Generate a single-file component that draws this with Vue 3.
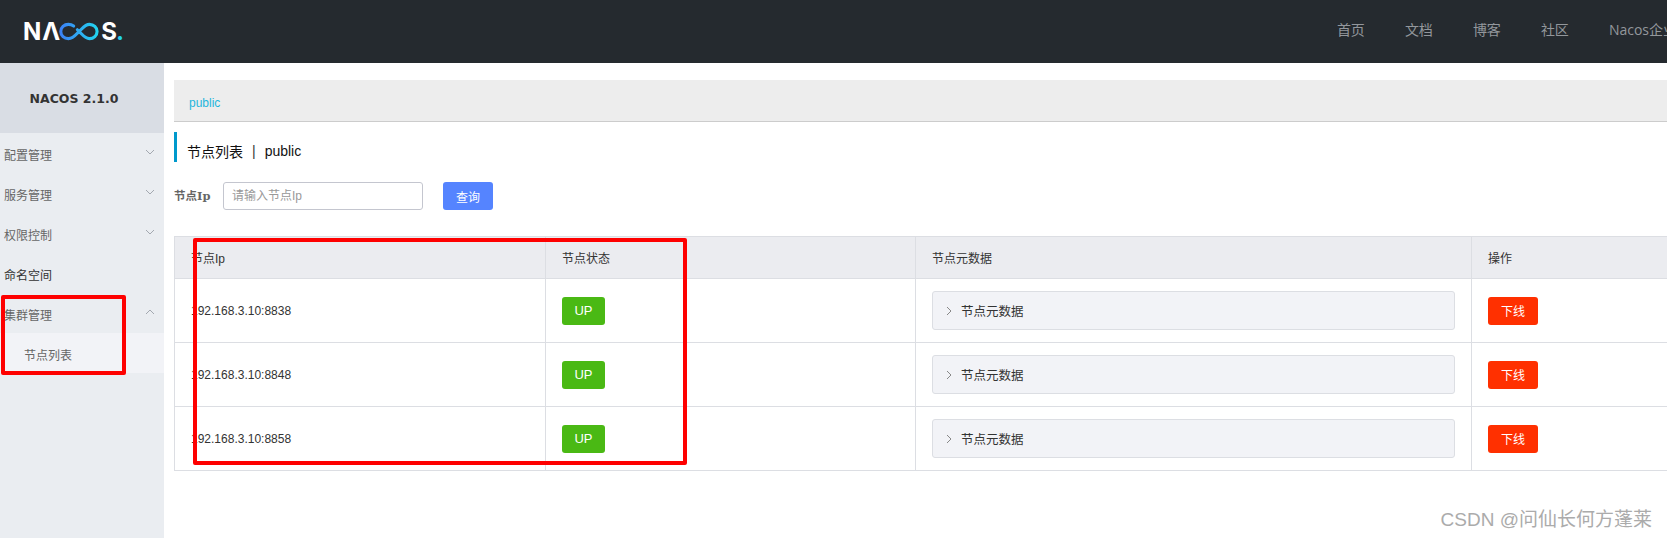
<template>
  <div class="page">
    <header class="topbar">
      <div class="logo">
        <span>N</span><span class="logo-a">Λ</span>
        <svg class="logo-loop" width="41" height="19" viewBox="0 0 42 18" fill="none">
          <defs>
            <linearGradient id="loopGrad" x1="0" y1="0" x2="1" y2="0">
              <stop offset="0" stop-color="#3b82f6" />
              <stop offset="1" stop-color="#22d3ee" />
            </linearGradient>
          </defs>
          <path d="M15 3.4C13.4 2.3 11.6 1.7 9.6 1.7 5.3 1.7 1.8 4.9 1.8 9s3.5 7.3 7.8 7.3c3.7 0 6.4-2.5 9.2-5.5l3.6-3.6c2.6-2.7 5-5.5 8.8-5.5 4.3 0 7.8 3.3 7.8 7.3s-3.5 7.3-7.8 7.3c-3.8 0-6.2-2.8-8.8-5.5L18.8 7.2" stroke="url(#loopGrad)" stroke-width="3.2" stroke-linecap="round" />
        </svg>
        <span>S</span><span class="logo-dot">.</span>
      </div>
      <nav class="topnav">
        <a v-for="item in navItems" :key="item">{{ item }}</a>
      </nav>
    </header>

    <div class="body">
      <aside class="sidebar">
        <div class="version">NACOS 2.1.0</div>
        <div v-for="menu in menus" :key="menu.label">
          <div class="menu-item" :class="{ dark: menu.dark }">
            <span>{{ menu.label }}</span>
            <svg v-if="menu.arrow" class="menu-arrow" :class="{ up: menu.open }" width="10" height="6" viewBox="0 0 10 6" fill="none">
              <path d="M1 1l4 4 4-4" stroke="#a3a8b0" stroke-width="1" />
            </svg>
          </div>
          <div v-if="menu.open" class="submenu">节点列表</div>
        </div>
      </aside>

      <main class="content">
        <div class="crumb">public</div>
        <div class="title"><span>节点列表</span><i>|</i><span>public</span></div>

        <div class="search">
          <label>节点Ip</label>
          <input class="search-input" placeholder="请输入节点Ip" />
          <button class="btn-query">查询</button>
        </div>

        <div class="table">
          <div class="row head">
            <div class="cell">节点Ip</div>
            <div class="cell">节点状态</div>
            <div class="cell">节点元数据</div>
            <div class="cell">操作</div>
          </div>
          <div v-for="ip in nodes" :key="ip" class="row">
            <div class="cell">{{ ip }}</div>
            <div class="cell"><span class="tag-up">UP</span></div>
            <div class="cell">
              <div class="meta">
                <svg width="6" height="10" viewBox="0 0 6 10" fill="none">
                  <path d="M1 1l4 4-4 4" stroke="#888" stroke-width="1" />
                </svg>
                <span>节点元数据</span>
              </div>
            </div>
            <div class="cell"><button class="btn-offline">下线</button></div>
          </div>
        </div>
      </main>
    </div>

    <!-- hand-drawn annotations on top of the screenshot -->
    <div class="mark mark-menu"></div>
    <div class="mark mark-table"></div>
    <div class="watermark">CSDN @问仙长何方蓬莱</div>
  </div>
</template>

<script setup>
const navItems = ['首页', '文档', '博客', '社区', 'Nacos企业版']

const menus = [
  { label: '配置管理', arrow: true },
  { label: '服务管理', arrow: true },
  { label: '权限控制', arrow: true },
  { label: '命名空间', dark: true },
  { label: '集群管理', arrow: true, open: true }
]

const nodes = ['192.168.3.10:8838', '192.168.3.10:8848', '192.168.3.10:8858']
</script>

<style>
html,
body {
  margin: 0;
  background: #fff;
  overflow: hidden;
}
</style>

<style scoped>
.page {
  position: relative;
  width: 1667px;
  height: 538px;
  overflow: hidden;
  font-family: "Liberation Sans", "Noto Sans CJK SC", sans-serif;
  font-size: 12px;
  color: #333;
}

.topbar {
  display: flex;
  align-items: center;
  height: 63px;
  background: #252a2f;
  white-space: nowrap;
}

.logo {
  display: flex;
  align-items: center;
  margin-left: 23px;
  font-family: "Inter", sans-serif;
  font-size: 24px;
  font-weight: 700;
  line-height: 1;
  color: #fff;
}

.logo-a {
  margin-left: 1px;
}

.logo-loop {
  margin: 0 1px 0 -1px;
}

.logo-dot {
  color: #22d3ee;
  margin-left: -1px;
}

.topnav {
  display: flex;
  gap: 40px;
  margin-left: auto;
  margin-right: -24px;
  padding-bottom: 6px;
  font-family: "Open Sans", "Noto Sans CJK SC", sans-serif;
  font-size: 14px;
  color: #93979c;
}

.body {
  display: flex;
}

.sidebar {
  flex: none;
  width: 164px;
  height: 475px;
  background: #eaedf1;
}

.version {
  display: flex;
  align-items: center;
  justify-content: center;
  box-sizing: border-box;
  height: 70px;
  padding-right: 16px;
  background: #d9dde4;
  font-family: "DejaVu Sans", "Noto Sans CJK SC", sans-serif;
  font-size: 12.5px;
  font-weight: 700;
  color: #333;
}

.menu-item {
  display: flex;
  align-items: center;
  justify-content: space-between;
  box-sizing: border-box;
  height: 40px;
  padding: 2px 9px 0 4px;
  color: #666;
}

.menu-item.dark {
  color: #333;
}

.menu-arrow {
  margin-top: -5px;
}

.menu-arrow.up {
  transform: rotate(180deg);
}

.submenu {
  display: flex;
  align-items: center;
  box-sizing: border-box;
  height: 40px;
  padding: 2px 0 0 24px;
  background: #f2f3f7;
  color: #666;
}

.content {
  flex: 1;
  min-width: 0;
  padding: 17px 0 0 10px;
}

.crumb {
  box-sizing: border-box;
  height: 42px;
  padding: 16px 0 0 15px;
  background: #ededed;
  border-bottom: 1px solid #ccc;
  color: #1fb6dc;
  line-height: 14px;
}

.title {
  display: flex;
  align-items: center;
  box-sizing: border-box;
  height: 30px;
  margin-top: 10px;
  padding: 8px 0 0 10px;
  border-left: 3px solid #09c;
  font-size: 14px;
  color: #111;
}

.title i {
  margin: 0 9px;
  font-style: normal;
  color: #333;
}

.search {
  display: flex;
  align-items: center;
  margin-top: 20px;
  height: 28px;
}

.search label {
  width: 49px;
  padding-bottom: 2px;
  font-family: "DejaVu Serif", "Noto Sans CJK SC", serif;
  font-size: 11.5px;
  font-weight: 700;
  color: #666;
}

.search-input {
  box-sizing: border-box;
  width: 200px;
  height: 28px;
  padding: 0 8px;
  border: 1px solid #c4c6cf;
  border-radius: 3px;
  outline: none;
  font: inherit;
}

.search-input::placeholder {
  color: #999;
}

.btn-query {
  width: 50px;
  height: 28px;
  margin-left: 20px;
  border: 0;
  border-radius: 3px;
  background: #5584ff;
  color: #fff;
  font: inherit;
}

.table {
  width: 1600px;
  margin-top: 26px;
  border-top: 1px solid #dcdee3;
  border-left: 1px solid #dcdee3;
}

.row {
  display: grid;
  grid-template-columns: 371px 370px 556px 1fr;
  height: 64px;
  box-sizing: border-box;
  border-bottom: 1px solid #dcdee3;
}

.row.head {
  height: 42px;
  background: #ebecf0;
}

.cell {
  display: flex;
  align-items: center;
  box-sizing: border-box;
  padding: 0 16px;
  border-right: 1px solid #dcdee3;
  color: #333;
}

.tag-up {
  display: flex;
  align-items: center;
  justify-content: center;
  width: 43px;
  height: 28px;
  border-radius: 3px;
  background: #4ab914;
  color: #fff;
  font-size: 13px;
}

.meta {
  display: flex;
  align-items: center;
  gap: 9px;
  box-sizing: border-box;
  width: 523px;
  height: 39px;
  padding-left: 13px;
  border: 1px solid #dcdee3;
  border-radius: 3px;
  background: #f2f3f7;
  font-size: 12.5px;
}

.btn-offline {
  width: 50px;
  height: 28px;
  border: 0;
  border-radius: 3px;
  background: #ff3000;
  color: #fff;
  font: inherit;
}

.mark {
  position: absolute;
  box-sizing: border-box;
  border: 4px solid #fe0000;
  border-radius: 2px;
}

.mark-menu {
  left: 1px;
  top: 295px;
  width: 125px;
  height: 80px;
}

.mark-table {
  left: 193px;
  top: 238px;
  width: 494px;
  height: 227px;
}

.watermark {
  position: absolute;
  right: 15px;
  top: 506px;
  font-size: 19px;
  line-height: 28px;
  color: #ababab;
  white-space: nowrap;
}
</style>
